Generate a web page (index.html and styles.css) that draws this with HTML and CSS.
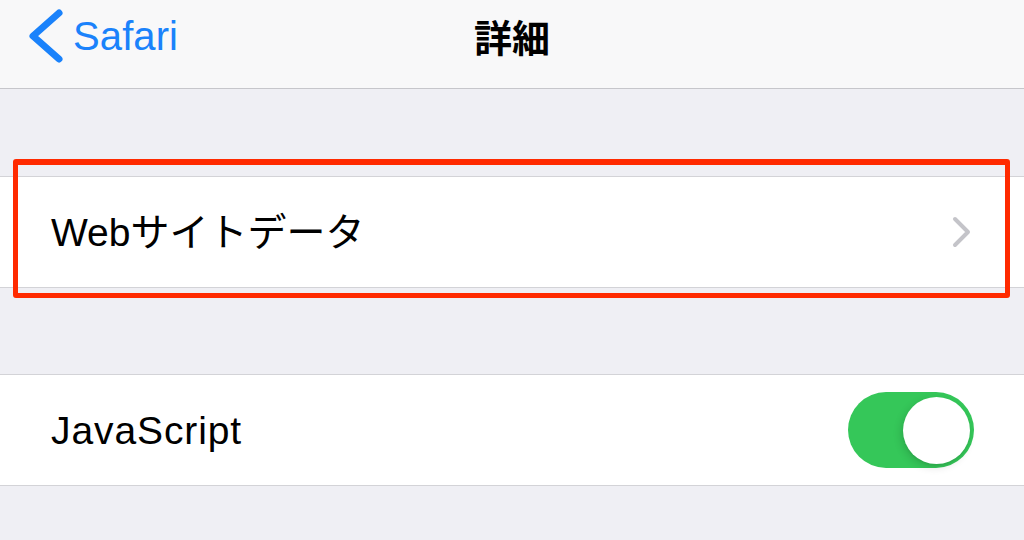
FILE: index.html
```html
<!DOCTYPE html>
<html lang="ja">
<head>
<meta charset="utf-8">
<title>詳細</title>
<link rel="stylesheet" href="styles.css">
</head>
<body>
<header class="navbar">
  <div class="nav-left">
    <svg class="back-chevron" width="36" height="56" viewBox="0 0 36 56" aria-hidden="true">
      <path d="M31 5 L5 28 L31 51" fill="none" stroke="#1a82fb" stroke-width="7" stroke-linecap="round" stroke-linejoin="round"/>
    </svg>
    <span class="back-label">Safari</span>
  </div>
  <h1 class="nav-title">詳細</h1>
  <div class="nav-right"></div>
</header>

<main class="content">
  <section class="group group-first">
    <div class="highlight-wrap">
      <div class="cell">
        <span class="cell-label">Webサイトデータ</span>
        <svg class="disclosure" width="20" height="32" viewBox="0 0 20 32" aria-hidden="true">
          <path d="M3 3 L16 16 L3 29" fill="none" stroke="#c4c4c9" stroke-width="4" stroke-linecap="round" stroke-linejoin="round"/>
        </svg>
      </div>
      <div class="highlight"></div>
    </div>
  </section>

  <section class="group group-second">
    <div class="cell">
      <span class="cell-label cell-label-latin">JavaScript</span>
      <div class="switch switch-on"><div class="switch-knob"></div></div>
    </div>
  </section>
</main>
</body>
</html>
```

FILE: styles.css
```css
html, body {
  margin: 0;
  padding: 0;
}

body {
  width: 1024px;
  height: 540px;
  overflow: hidden;
  background: #efeff4;
  font-family: "Liberation Sans", "Noto Sans CJK JP", sans-serif;
  color: #000;
}

.navbar {
  height: 89px;
  box-sizing: border-box;
  background: #f8f8f9;
  border-bottom: 1px solid #c6c6cb;
  display: grid;
  grid-template-columns: 1fr auto 1fr;
  align-items: center;
  padding-bottom: 17px;
}

.nav-left {
  display: flex;
  align-items: center;
  padding-left: 28px;
}

.back-chevron {
  display: block;
  flex: none;
}

.back-label {
  margin-left: 9px;
  font-size: 40px;
  line-height: 1;
  color: #1a82fb;
  letter-spacing: 0.1px;
}

.nav-title {
  margin: 0;
  font-family: "Noto Sans CJK JP", sans-serif;
  font-weight: 700;
  font-size: 38px;
  line-height: 1;
  color: #000;
}

.content {
  display: flex;
  flex-direction: column;
}

.group-first {
  margin-top: 87px;
}

.group-second {
  margin-top: 86px;
}

.highlight-wrap {
  position: relative;
}

.cell {
  height: 112px;
  box-sizing: border-box;
  background: #fff;
  border-top: 1px solid #d3d3d7;
  border-bottom: 1px solid #d3d3d7;
  display: flex;
  align-items: center;
  justify-content: space-between;
  padding-left: 51px;
  padding-right: 50px;
}

.cell-label {
  font-size: 39px;
  line-height: 1;
  color: #000;
}

.cell-label-latin {
  letter-spacing: 0.9px;
}

.disclosure {
  display: block;
  margin-right: 2px;
}

.highlight {
  position: absolute;
  left: 13px;
  right: 14px;
  top: -17px;
  bottom: -10px;
  border: 5px solid #ff2a00;
  border-top-width: 6px;
  border-radius: 3px;
  box-sizing: border-box;
  pointer-events: none;
}

.switch {
  width: 126px;
  height: 76px;
  border-radius: 38px;
  box-sizing: border-box;
  display: flex;
  align-items: center;
  padding: 0 4px;
}

.switch-on {
  background: #35c759;
  justify-content: flex-end;
}

.switch-knob {
  width: 67px;
  height: 67px;
  border-radius: 50%;
  background: #fff;
  box-shadow: -2px 3px 8px rgba(0, 0, 0, 0.14), 0 2px 2px rgba(0, 0, 0, 0.05);
}
```
